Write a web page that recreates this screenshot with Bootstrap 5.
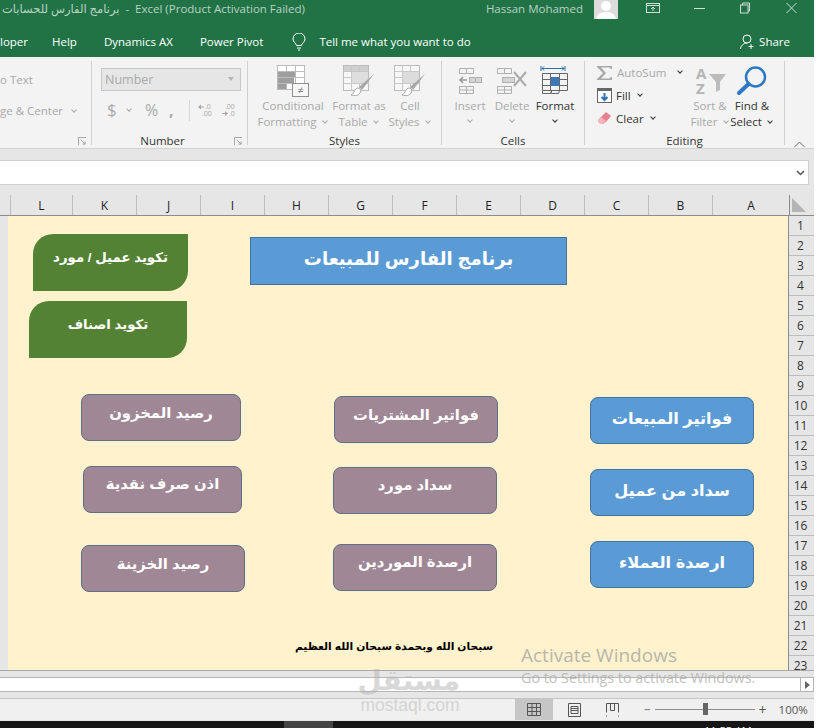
<!DOCTYPE html>
<html lang="en">
  <head>
    <meta charset="UTF-8" />
    <title>Excel</title>
    <link href="https://cdn.jsdelivr.net/npm/bootstrap@5.3.0/dist/css/bootstrap.min.css" rel="stylesheet" />
    <style>
      html, body { width: 821px; height: 728px; overflow: hidden; background: #fff; }
      body { font-family: "Open Sans", "DejaVu Sans", sans-serif; font-size: 11.5px; color: #333; position: relative; }
      .xl-app { width: 814px; height: 728px; background: #e6e6e6; position: relative; overflow: hidden; }

      /* title + menu */
      .xl-title { height: 19px; background: #217346; color: #b9d2c4; padding-left: 2px; padding-right: 17px; white-space: nowrap; line-height: 17px; }
      .xl-user { margin-left: auto; }
      .xl-avatar { width: 24px; height: 19px; margin: 0 28px 0 11px; }
      .xl-w1 { margin-top: 2px; margin-right: 34px; }
      .xl-w2 { margin-top: 2px; margin-right: 35px; }
      .xl-w3 { margin-top: 2px; margin-right: 36px; }
      .xl-w4 { margin-top: 2px; }
      .xl-menu { height: 38px; background: #217346; color: #fff; white-space: nowrap; padding-top: 8px; }
      .xl-menu span { margin-right: 27px; }
      .xl-menu .xl-first { margin-right: 24px; }
      .xl-menu .xl-tell { margin-right: 0; margin-left: 13px; }
      .xl-bulb { margin-left: 2px; }
      .xl-menu .xl-share-t { margin: 0 24px 0 4px; }
      .xl-share { margin-left: auto; }

      /* ribbon */
      .xl-ribbon { height: 92px; background: #f3f3f3; border-bottom: 1px solid #d2d2d2; padding-top: 4px; }
      .xl-grp { height: 84px; border-right: 1px solid #d0d0d0; position: relative; display: flex; flex-direction: column; }
      .xl-g1 { width: 92px; }
      .xl-g2 { width: 156px; }
      .xl-g3 { width: 194px; }
      .xl-g4 { width: 143px; }
      .xl-g5 { width: 200px; }
      .xl-g2 .xl-body { padding: 7px 0 0 9px; }
      .xl-g3 .xl-body { padding-left: 11px; }
      .xl-g4 .xl-body { padding-left: 7px; }
      .xl-body { flex: 1; display: flex; min-height: 0; }
      .xl-lbl { height: 12px; line-height: 16px; text-align: center; color: #333; font-size: 11.5px; }
      .xl-g2 .xl-lbl { padding-right: 14px; }
      .xl-launch { position: absolute; right: 5px; bottom: 0; width: 8px; height: 8px; }
      .xl-off { color: #a9a9a9; }
      .xl-on { color: #333; }
      .xl-t1 { padding-top: 11px; line-height: 16px; white-space: nowrap; }
      .xl-t1 div:last-child { margin-top: 15px; }
      .xl-combo { width: 140px; height: 23px; background: #e6e6e6; border: 1px solid #c8c8c8; padding-left: 3px; color: #a9a9a9; line-height: 21px; font-size: 12.5px; }
      .xl-arr { margin: 8px 6px 0 auto; width: 0; height: 0; border: 3px solid transparent; border-top: 4px solid #b5b5b5; }
      .xl-numrow { margin-top: 8px; height: 22px; color: #a9a9a9; padding-left: 6px; }
      .xl-dollar { font-size: 17px; width: 17px; }
      .xl-pct { font-size: 16px; margin-left: 12px; width: 18px; }
      .xl-comma { font-weight: 700; font-size: 16px; margin-left: 6px; width: 12px; line-height: 12px; color: #a9a9a9; }
      .xl-numsep { width: 1px; height: 21px; background: #d6d6d6; margin: 0 8px; }
      .xl-tool { display: flex; flex-direction: column; align-items: center; text-align: center; line-height: 16px; white-space: nowrap; padding-top: 4px; }
      .xl-tool svg { margin-bottom: 1px; }
      .xl-w42 { width: 42px; }
      .xl-w44 { width: 44px; }
      .xl-w68 { width: 68px; }
      .xl-w64 { width: 64px; }
      .xl-w38 { width: 38px; }
      .xl-chev { display: inline-block; width: 4px; height: 4px; border-right: 1px solid currentColor; border-bottom: 1px solid currentColor; transform: rotate(45deg); margin: 0 2px 3px 3px; vertical-align: middle; flex: none; }
      .xl-tool > .xl-chev { margin: 4px 0 0; }
      .xl-edit { width: 104px; padding: 0 0 0 12px; }
      .xl-edit > div { height: 23px; gap: 4px; }
      .xl-collapse { flex: 1; display: flex; align-items: flex-end; justify-content: center; height: 87px; }

      /* formula bar */
      .xl-band { height: 11px; }
      .xl-fx { height: 25px; width: 809px; background: #fff; border: 1px solid #cfcfcf; border-left: 0; padding-right: 3px; }
      .xl-gap { height: 10px; }

      /* sheet */
      .xl-cols { height: 21px; border-bottom: 1px solid #8c8c8c; color: #222; font-size: 12px; }
      .xl-cols div { height: 20px; line-height: 21px; text-align: center; border-right: 1px solid #bdbdbd; width: 64px; }
      .xl-cols .xl-c0 { width: 11px; }
      .xl-cols .xl-cl { width: 62px; }
      .xl-cols .xl-ca { width: 77px; border-right: 1px solid #8c8c8c; }
      .xl-cols .xl-corner { width: 24px; border: 0; padding: 3px 0 0 2px; line-height: 0; text-align: left; }
      .xl-sheet { height: 455px; overflow: hidden; border-bottom: 1px solid #a8a8a8; }
      .xl-gutter { width: 8px; background: #e6e6e6; }
      .xl-canvas { width: 781px; background: #fff2cc; border-right: 1px solid #8c8c8c; }
      .xl-rows { width: 25px; font-size: 12px; }
      .xl-rows div { height: 20px; line-height: 19px; text-align: center; padding-right: 2px; border-bottom: 1px solid #bdbdbd; flex: none; }

      /* shapes on the sheet */
      .xl-sh { position: absolute; color: #fff; font-family: "Liberation Sans", "DejaVu Sans", sans-serif; font-weight: 700; text-align: center; display: flex; align-items: center; justify-content: center; white-space: nowrap; }
      .xl-head { left: 250px; top: 237px; width: 317px; height: 48px; background: #5b9bd5; border: 1px solid #41719c; font-size: 18px; padding-bottom: 4px; }
      .xl-green { background: #548235; border-radius: 20px 0 20px 0; font-size: 13.300px; height: 57px; padding-bottom: 9px; }
      .xl-gr1 { left: 33px; top: 234px; width: 155px; }
      .xl-gr2 { left: 29px; top: 301px; width: 158px; }
      .xl-btn { width: 164px; height: 47px; border-radius: 8px; border: 1px solid #5f6f85; padding-bottom: 8px; }
      .xl-mauve { background: #a08796; font-size: 14.800px; }
      .xl-blue { background: #5b9bd5; border-color: #41719c; font-size: 16.200px; padding-bottom: 4px; }
      .xl-m1 { left: 81px; top: 394px; width: 160px; }
      .xl-m2 { left: 334px; top: 396px; }
      .xl-m3 { left: 83px; top: 466px; width: 159px; padding-bottom: 10px; }
      .xl-m4 { left: 333px; top: 467px; padding-bottom: 10px; }
      .xl-m5 { left: 81px; top: 545px; }
      .xl-m6 { left: 333px; top: 544px; padding-bottom: 10px; }
      .xl-b1 { left: 590px; top: 397px; }
      .xl-b2 { left: 590px; top: 469px; }
      .xl-b3 { left: 590px; top: 541px; }
      .xl-foot { left: 295px; top: 637px; width: 198px; color: #000; font-size: 10.700px; height: 18px; }

      /* bottom */
      .xl-gap2 { height: 6px; }
      .xl-hscroll { height: 15px; background: #fff; border-top: 1px solid #b5b5b5; border-bottom: 1px solid #b5b5b5; }
      .xl-arrow { margin-left: auto; width: 14px; border-left: 1px solid #b5b5b5; border-right: 1px solid #b5b5b5; }
      .xl-gap3 { height: 7px; border-bottom: 1px solid #c4c4c4; }
      .xl-status { height: 21px; background: #f0f0f0; padding-left: 515px; color: #555; }
      .xl-view { width: 38px; height: 21px; }
      .xl-view-on { background: #c6c6c6; }
      .xl-view-2 { margin-left: 2px; }
      .xl-zoom { flex: 1; padding-left: 13px; }
      .xl-track { width: 100px; height: 1px; background: #8c8c8c; position: relative; margin-left: 4px; }
      .xl-thumb { position: absolute; left: 48px; top: -6px; width: 5px; height: 12px; background: #666; }
      .xl-plus { margin-left: 4px; font-size: 14px; line-height: 14px; }
      .xl-pct2 { margin-left: 12px; }
      .xl-task { position: absolute; left: 0; width: 814px; top: 721px; height: 7px; background: #161616; overflow: hidden; }
      .xl-task-on { position: absolute; left: 284px; top: 0; width: 49px; height: 7px; background: #444; }
      .xl-clock { position: absolute; left: 704px; top: 4px; color: #eee; font-size: 11px; line-height: 12px; }

      /* overlays */
      .xl-act { position: absolute; left: 521px; top: 642px; color: #a8a8a4; font-size: 19px; line-height: 26px; white-space: nowrap; opacity: .8; }
      .xl-act2 { position: absolute; left: 521px; top: 669px; color: #a8a8a4; font-size: 14.300px; line-height: 18px; white-space: nowrap; opacity: .7; }
      .xl-mark { position: absolute; left: 360px; top: 663px; width: 100px; text-align: center; color: #b3b3b3; opacity: .5; font-family: "DejaVu Sans", sans-serif; font-weight: 700; font-size: 28px; line-height: 36px; }
      .xl-mark2 { position: absolute; left: 360px; top: 697px; width: 100px; text-align: center; color: #bdbdbd; opacity: .55; font-family: "Liberation Sans", sans-serif; font-size: 17.500px; line-height: 17px; }
    </style>
  </head>
  <body>
    <div class="xl-app">
      <!-- title -->
      <div class="xl-title d-flex align-items-start">
        <span dir="ltr">برنامج الفارس للحسابات&nbsp; -&nbsp; Excel (Product Activation Failed)</span>
        <span class="xl-user">Hassan Mohamed</span>
        <svg class="xl-avatar" viewBox="0 0 24 19"><rect width="24" height="19" fill="#dcdcdc"/><circle cx="12" cy="6" r="5" fill="#fff"/><path d="M2 19c1-6 6-7 10-7s9 1 10 7z" fill="#fff"/></svg>
        <svg class="xl-w1" width="14" height="12" viewBox="0 0 14 12" fill="none" stroke="#cfe0d6"><rect x=".5" y="1.500" width="13" height="9"/><path d="M.5 3.500h13M7 9V5M5 7l2-2 2 2"/></svg>
        <svg class="xl-w2" width="11" height="12" viewBox="0 0 11 12" stroke="#cfe0d6"><path d="M0 6.500h11"/></svg>
        <svg class="xl-w3" width="10" height="12" viewBox="0 0 10 12" fill="none" stroke="#cfe0d6"><rect x=".5" y="3" width="7.500" height="8"/><path d="M2.500 3V1h7v8H8"/></svg>
        <svg class="xl-w4" width="11" height="12" viewBox="0 0 11 12" stroke="#cfe0d6"><path d="M.5 1l10 10M10.500 1L.5 11"/></svg>
      </div>
      <div class="xl-menu d-flex align-items-center">
        <span class="xl-first">loper</span>
        <span>Help</span>
        <span>Dynamics AX</span>
        <span>Power Pivot</span>
        <svg class="xl-bulb" width="14" height="18" viewBox="0 0 14 18" fill="none" stroke="#fff"><path d="M4.500 12.500C4 10 1 9 1 6a6 6 0 0 1 12 0c0 3-3 4-3.500 6.500zM5 15h4M6 17h2"/></svg>
        <span class="xl-tell">Tell me what you want to do</span>
        <svg class="xl-share" width="15" height="16" viewBox="0 0 15 16" fill="none" stroke="#fff"><circle cx="7" cy="5" r="4"/><path d="M.5 15c0-3 3-6 6.500-6M11 10v5M8.500 12.500h5"/></svg>
        <span class="xl-share-t">Share</span>
      </div>

      <!-- ribbon -->
      <div class="xl-ribbon d-flex">
        <div class="xl-grp xl-g1">
          <div class="xl-body xl-off"><div class="xl-t1"><div>o Text</div><div>ge &amp; Center &nbsp;<span class="xl-chev"></span></div></div></div>
          <div class="xl-lbl">&nbsp;</div>
          <svg class="xl-launch" viewBox="0 0 9 9" fill="none" stroke="#9a9a9a"><path d="M.5 9V.5H9M3 3l5 5M8 5v3H5"/></svg>
        </div>
        <div class="xl-grp xl-g2">
          <div class="xl-body flex-column">
            <div class="xl-combo d-flex">Number<span class="xl-arr"></span></div>
            <div class="xl-numrow d-flex align-items-center">
              <span class="xl-dollar">$</span><span class="xl-chev"></span>
              <span class="xl-pct">%</span><span class="xl-comma">,</span>
              <span class="xl-numsep"></span>
              <svg class="me-2" width="15" height="14" viewBox="0 0 15 14" fill="#a9a9a9"><path d="M0 4l3-2.500v2h3v1H3v2z"/><text x="7" y="6" font-size="7" font-family="Open Sans">.0</text><text x="4" y="13" font-size="7" font-family="Open Sans">.00</text></svg>
              <svg width="15" height="14" viewBox="0 0 15 14" fill="#a9a9a9"><text x="4" y="6" font-size="7" font-family="Open Sans">.00</text><path d="M7 10.500l-3-2.500v2H1v1h3v2z"/><text x="8" y="13" font-size="7" font-family="Open Sans">.0</text></svg>
            </div>
          </div>
          <div class="xl-lbl">Number</div>
          <svg class="xl-launch" viewBox="0 0 9 9" fill="none" stroke="#9a9a9a"><path d="M.5 9V.5H9M3 3l5 5M8 5v3H5"/></svg>
        </div>
        <div class="xl-grp xl-g3">
          <div class="xl-body xl-off">
            <div class="xl-tool xl-w68">
              <svg width="32" height="32" viewBox="0 0 32 32"><rect x=".5" y=".5" width="27" height="24" fill="#fff" stroke="#bbb"/><path d="M.5 6.500h27M.5 12.500h27M.5 18.500h27M9.500.5v24M18.500.5v24" stroke="#bbb"/><path d="M1 7h8v5H1zM9 7h9v5H9zM1 13h16v5H1zM1 19h8v5H1z" fill="#9e9e9e"/><rect x="15.500" y="18.500" width="16" height="13" fill="#f7f7f7" stroke="#8f8f8f"/><text x="23.500" y="29" font-size="11" text-anchor="middle" fill="#777">&#8800;</text></svg>
              <span>Conditional</span><span>Formatting <span class="xl-chev"></span></span>
            </div>
            <div class="xl-tool xl-w64">
              <svg width="32" height="32" viewBox="0 0 32 32"><rect x=".5" y=".5" width="25" height="25" fill="#f7f7f7" stroke="#bbb"/><path d="M1 1h24v5H1z" fill="#cfcfcf"/><path d="M.5 6.500h25M.5 12.500h25M.5 18.500h25M8.500.5v25M16.500.5v25" stroke="#c8c8c8"/><path d="M9 7h16v11H9z" fill="#dedede"/><path d="M31 9 L16 22l3 3z" fill="#a8a8a8"/><path d="M14 23c3 0 5 2 3 5s-5 3-9 2c3-1 3-5 6-7z" fill="#fff" stroke="#a8a8a8"/></svg>
              <span>Format as</span><span>Table <span class="xl-chev"></span></span>
            </div>
            <div class="xl-tool xl-w38">
              <svg width="32" height="32" viewBox="0 0 32 32"><rect x=".5" y=".5" width="25" height="25" fill="#f7f7f7" stroke="#bbb"/><path d="M.5 6.500h25M.5 12.500h25M.5 18.500h25M8.500.5v25M16.500.5v25" stroke="#c8c8c8"/><path d="M9 7h16v11H9z" fill="#dcdcdc"/><path d="M31 9 L16 22l3 3z" fill="#a8a8a8"/><path d="M14 23c3 0 5 2 3 5s-5 3-9 2c3-1 3-5 6-7z" fill="#fff" stroke="#a8a8a8"/></svg>
              <span>Cell</span><span>Styles <span class="xl-chev"></span></span>
            </div>
          </div>
          <div class="xl-lbl">Styles</div>
        </div>
        <div class="xl-grp xl-g4">
          <div class="xl-body xl-off">
            <div class="xl-tool xl-w42">
              <svg width="32" height="32" viewBox="0 0 32 32" fill="none" stroke="#b0b0b0"><path d="M5.500 3.500h14v5h-14zM12.500 3.500v5M5.500 21.500h14v7h-14zM12.500 21.500v7M5.500 25h14"/><rect x="15.500" y="12.500" width="12" height="5" fill="#d4d4d4"/><path d="M21.500 12.500v5" /><path d="M13 15H6M9 12l-3 3 3 3" stroke="#999" stroke-width="1.500"/></svg>
              <span>Insert</span><span class="xl-chev"></span>
            </div>
            <div class="xl-tool xl-w42">
              <svg width="32" height="32" viewBox="0 0 32 32" fill="none" stroke="#b0b0b0"><path d="M1.500 3.500h14v5h-14zM8.500 3.500v5M1.500 21.500h14v7h-14zM8.500 21.500v7M1.500 25h14"/><rect x="6.500" y="12.500" width="12" height="5" fill="#d4d4d4"/><path d="M18 7l12 14M30 7L18 21" stroke="#aaa" stroke-width="2"/></svg>
              <span>Delete</span><span class="xl-chev"></span>
            </div>
            <div class="xl-tool xl-w44 xl-on">
              <svg width="32" height="32" viewBox="0 0 32 32" fill="none"><path d="M2 1v5M26 1v5M3 3.500h22M5 1.500l-2 2 2 2M23 1.500l2 2-2 2" stroke="#2b6fb3"/><path d="M3.500 8.500h25v17h-25zM3.500 14.500h25M3.500 20.500h25M11.500 8.500v17M20.500 8.500v17" stroke="#666"/><rect x="12" y="12" width="8" height="9" fill="#3c78b5"/><path d="M3.500 25.500v3h8l1-3M12.500 25.500v3h7l1-3" stroke="#666"/></svg>
              <span>Format</span><span class="xl-chev"></span>
            </div>
          </div>
          <div class="xl-lbl">Cells</div>
        </div>
        <div class="xl-grp xl-g5">
          <div class="xl-body">
            <div class="xl-edit">
              <div class="d-flex align-items-center xl-off"><svg width="16" height="16" viewBox="0 0 16 16" fill="#a9a9a9"><path d="M0 1h15v3h-1.500l-.5-1.500H4l5 5.500-5 5.500h9l.5-1.500H15v3H0v-1l6-6-6-6z"/></svg><span>AutoSum</span><span class="xl-chev ms-2 xl-on"></span></div>
              <div class="d-flex align-items-center"><svg width="15" height="15" viewBox="0 0 15 15"><rect x=".5" y=".5" width="14" height="14" fill="#fff" stroke="#666"/><rect width="15" height="3" fill="#666"/><path d="M7.500 5v7M4.500 9l3 3 3-3" fill="none" stroke="#2f75b5" stroke-width="2"/></svg><span>Fill</span><span class="xl-chev"></span></div>
              <div class="d-flex align-items-center"><svg width="15" height="15" viewBox="0 0 15 15"><path d="M9 1l5 4-5 6-3 2-4-1-1-3z" fill="#e9808e"/><path d="M1 9l3-3 5 4-3 3-4-1z" fill="#f3b4bd"/></svg><span>Clear</span><span class="xl-chev"></span></div>
            </div>
            <div class="xl-tool xl-w42 xl-off">
              <svg width="32" height="32" viewBox="0 0 32 32"><text x="2" y="14" font-size="15" font-weight="700" fill="#b4b4b4" font-family="Open Sans">A</text><text x="2" y="29" font-size="15" font-weight="700" fill="#b4b4b4" font-family="Open Sans">Z</text><path d="M15 9h17l-6 8v8l-4 2v-10z" fill="#bcbcbc"/></svg>
              <span>Sort &amp;</span><span>Filter <span class="xl-chev"></span></span>
            </div>
            <div class="xl-tool xl-w42 xl-on">
              <svg width="32" height="32" viewBox="0 0 32 32" fill="none"><circle cx="19.500" cy="12" r="9.500" stroke="#2b79c2" stroke-width="2.500"/><path d="M12.500 19L3 28" stroke="#2b79c2" stroke-width="4" stroke-linecap="round"/></svg>
              <span>Find &amp;</span><span>Select <span class="xl-chev"></span></span>
            </div>
          </div>
          <div class="xl-lbl">Editing</div>
        </div>
        <div class="xl-collapse"><svg width="11" height="7" viewBox="0 0 11 7" fill="none" stroke="#666"><path d="M.5 6l5-5 5 5"/></svg></div>
      </div>

      <!-- formula bar -->
      <div class="xl-band"></div>
      <div class="xl-fx d-flex align-items-center justify-content-end"><svg width="9" height="6" viewBox="0 0 9 6" fill="none" stroke="#555" stroke-width="1.500"><path d="M1 1l3.500 3.500L8 1"/></svg></div>
      <div class="xl-gap"></div>

      <!-- column headers -->
      <div class="xl-cols d-flex">
        <div class="xl-c0"></div><div class="xl-cl">L</div><div>K</div><div>J</div><div>I</div><div>H</div><div>G</div><div>F</div><div>E</div><div>D</div><div>C</div><div>B</div><div class="xl-ca">A</div>
        <div class="xl-corner"><svg width="14" height="14" viewBox="0 0 14 14"><path d="M0 14h14L0 0z" fill="#b4b4b4"/></svg></div>
      </div>
      <div class="xl-sheet d-flex">
        <div class="xl-gutter"></div>
        <div class="xl-canvas"></div>
        <div class="xl-rows d-flex flex-column" id="rows"></div>
      </div>
      <div class="xl-gap2"></div>
      <div class="xl-hscroll d-flex"><div class="xl-arrow d-flex align-items-center justify-content-center"><svg width="5" height="8" viewBox="0 0 5 8"><path d="M0 0l5 4-5 4z" fill="#666"/></svg></div></div>
      <div class="xl-gap3"></div>
      <div class="xl-status d-flex align-items-center">
        <div class="xl-view xl-view-on d-flex align-items-center justify-content-center"><svg width="14" height="13" viewBox="0 0 14 13" fill="none" stroke="#555"><path d="M.5.500h13v12H.5zM.5 4.500h13M.5 8.500h13M5 .5v12M9.500.5v12"/></svg></div>
        <div class="xl-view xl-view-2 d-flex align-items-center justify-content-center"><svg width="13" height="14" viewBox="0 0 13 14" fill="none" stroke="#555"><path d="M.5.500h12v13H.5zM3 3.500h7v7H3zM3 5.500h7M3 7.500h7"/></svg></div>
        <div class="xl-view d-flex align-items-center justify-content-center"><svg width="13" height="14" viewBox="0 0 13 14" fill="none" stroke="#555"><path d="M.5 9.500V.5h12v9M.5 13.500v-1M12.500 13.500v-1M4.500.5v7h4V.5"/></svg></div>
        <div class="xl-zoom d-flex align-items-center">
          <span>&minus;</span>
          <div class="xl-track"><div class="xl-thumb"></div></div>
          <span class="xl-plus">+</span>
          <span class="xl-pct2">100%</span>
        </div>
      </div>

      <!-- shapes -->
      <div class="xl-sh xl-head" dir="rtl">برنامج الفارس للمبيعات</div>
      <div class="xl-sh xl-green xl-gr1" dir="rtl">تكويد عميل / مورد</div>
      <div class="xl-sh xl-green xl-gr2" dir="rtl">تكويد اصناف</div>
      <div class="xl-sh xl-btn xl-mauve xl-m1" dir="rtl">رصيد المخزون</div>
      <div class="xl-sh xl-btn xl-mauve xl-m2" dir="rtl">فواتير المشتريات</div>
      <div class="xl-sh xl-btn xl-mauve xl-m3" dir="rtl">اذن صرف نقدية</div>
      <div class="xl-sh xl-btn xl-mauve xl-m4" dir="rtl">سداد مورد</div>
      <div class="xl-sh xl-btn xl-mauve xl-m5" dir="rtl">رصيد الخزينة</div>
      <div class="xl-sh xl-btn xl-mauve xl-m6" dir="rtl">ارصدة الموردين</div>
      <div class="xl-sh xl-btn xl-blue xl-b1" dir="rtl">فواتير المبيعات</div>
      <div class="xl-sh xl-btn xl-blue xl-b2" dir="rtl">سداد من عميل</div>
      <div class="xl-sh xl-btn xl-blue xl-b3" dir="rtl">ارصدة العملاء</div>
      <div class="xl-sh xl-foot" dir="rtl">سبحان الله وبحمدة سبحان الله العظيم</div>

      <!-- overlays -->
      <div class="xl-act">Activate Windows</div>
      <div class="xl-act2">Go to Settings to activate Windows.</div>
      <div class="xl-mark" dir="rtl">مستقل</div>
      <div class="xl-mark2">mostaql.com</div>
      <div class="xl-task"><div class="xl-task-on"></div><div class="xl-clock">11:55 AM</div></div>
    </div>

    <script>
      const rows = document.getElementById("rows");
      for (let i = 1; i <= 23; i++) {
        rows.innerHTML += `<div>${i}</div>`;
      }
    </script>
    <script src="https://cdn.jsdelivr.net/npm/bootstrap@5.3.0/dist/js/bootstrap.bundle.min.js"></script>
  </body>
</html>
